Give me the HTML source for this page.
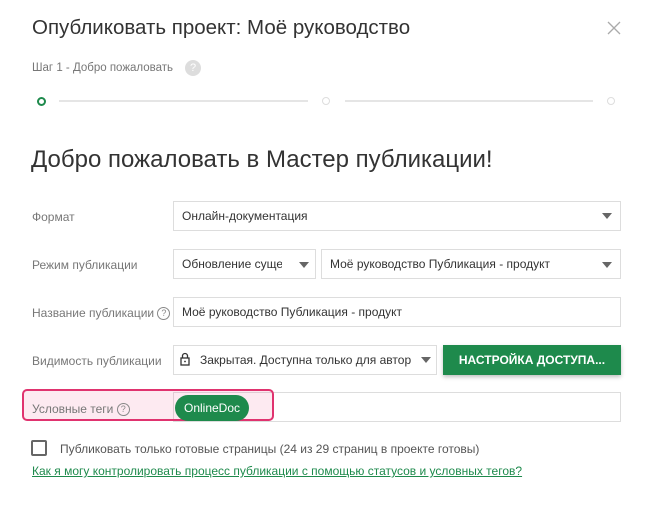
<!DOCTYPE html>
<html><head><meta charset="utf-8"><style>
body{margin:0;width:653px;height:515px;background:#fff;font-family:"Liberation Sans","DejaVu Sans",sans-serif;position:relative;overflow:hidden;color:#333}
.a{position:absolute;white-space:nowrap}
.lbl{font-size:12px;color:#777}
.box{position:absolute;border:1px solid #ddd;background:#fff;box-sizing:border-box;font-size:12px;color:#333;line-height:28px;padding-left:8px;white-space:nowrap;overflow:hidden}
.tri{position:absolute;width:0;height:0;border-left:5px solid transparent;border-right:5px solid transparent;border-top:6px solid #666;z-index:2}
.q{display:inline-block;width:11px;height:11px;border:1px solid #888;border-radius:50%;font-size:9px;line-height:11px;text-align:center;color:#888;vertical-align:middle}
</style></head><body>
<div class="a" style="left:32px;top:16px;font-size:20.5px;color:#333">Опубликовать проект: Моё руководство</div>
<svg class="a" style="left:607px;top:21px" width="14" height="14"><path d="M1 1L13 13M13 1L1 13" stroke="#aaa" stroke-width="1.3"/></svg>
<div class="a" style="left:32px;top:62px;font-size:11.5px;color:#777">Шаг 1 - Добро пожаловать</div>
<div class="a" style="left:185px;top:60px;width:16px;height:16px;border-radius:50%;background:#ddd;color:#fff;font-size:11px;text-align:center;line-height:16px">?</div>
<div class="a" style="left:37px;top:97px;width:5px;height:5px;border:2px solid #1e8a4c;border-radius:50%"></div>
<div class="a" style="left:59px;top:100px;width:249px;height:2px;background:#e5e5e5"></div>
<div class="a" style="left:322px;top:97px;width:6px;height:6px;border:1px solid #ddd;border-radius:50%"></div>
<div class="a" style="left:345px;top:100px;width:248px;height:2px;background:#e5e5e5"></div>
<div class="a" style="left:607px;top:97px;width:6px;height:6px;border:1px solid #ddd;border-radius:50%"></div>
<div class="a" style="left:31px;top:146px;font-size:24px;color:#333">Добро пожаловать в Мастер публикации!</div>

<div class="a lbl" style="left:32px;top:210px">Формат</div>
<div class="box" style="left:173px;top:201px;width:448px;height:30px">Онлайн-документация</div>
<div class="tri" style="left:602px;top:213px"></div>

<div class="a lbl" style="left:32px;top:258px">Режим публикации</div>
<div class="box" style="left:173px;top:249px;width:143px;height:30px"><span style="display:inline-block;width:100px;overflow:hidden;vertical-align:top">Обновление существующей</span></div>
<div class="tri" style="left:299px;top:262px;"></div>
<div class="box" style="left:321px;top:249px;width:300px;height:30px">Моё руководство Публикация - продукт</div>
<div class="tri" style="left:602px;top:262px"></div>

<div class="a lbl" style="left:32px;top:306px">Название публикации <span class="q">?</span></div>
<div class="box" style="left:173px;top:297px;width:448px;height:30px">Моё руководство Публикация - продукт</div>

<div class="a lbl" style="left:32px;top:354px">Видимость публикации</div>
<div class="box" style="left:173px;top:345px;width:264px;height:30px;padding-left:26px">Закрытая. Доступна только для автор</div>
<svg class="a" style="left:180px;top:352px" width="10" height="14"><path d="M2.5 6V4a2.5 2.5 0 0 1 5 0v2" fill="none" stroke="#333" stroke-width="1.3"/><rect x="1" y="6" width="8" height="7" fill="none" stroke="#333" stroke-width="1.3"/><circle cx="5" cy="9.5" r="0.9" fill="#333"/></svg>
<div class="tri" style="left:421px;top:357px"></div>
<div class="a" style="left:443px;top:345px;width:178px;height:30px;background:#1e8a4c;color:#fff;font-weight:bold;font-size:12px;line-height:30px;text-align:center;box-shadow:0 2px 4px rgba(0,0,0,.25)">НАСТРОЙКА ДОСТУПА...</div>

<div class="box" style="left:173px;top:392px;width:448px;height:30px"></div>
<div class="a" style="left:22px;top:389px;width:252px;height:32px;background:rgba(240,80,140,.12);border:2px solid #e0336f;border-radius:5px;box-sizing:border-box"></div>
<div class="a lbl" style="left:32px;top:402px">Условные теги <span class="q">?</span></div>
<div class="a" style="left:175px;top:395px;width:74px;height:26px;border-radius:13px;background:#1e8a4c;color:#fff;font-size:12px;line-height:26px;text-align:center">OnlineDoc</div>

<div class="a" style="left:31px;top:440px;width:16px;height:16px;border:2px solid #666;border-radius:2px;box-sizing:border-box"></div>
<div class="a" style="left:60px;top:442px;font-size:12px;color:#555">Публиковать только готовые страницы (24 из 29 страниц в проекте готовы)</div>
<div class="a" style="left:32px;top:464px;font-size:12px;color:#1e8a4c;text-decoration:underline">Как я могу контролировать процесс публикации с помощью статусов и условных тегов?</div>
</body></html>
